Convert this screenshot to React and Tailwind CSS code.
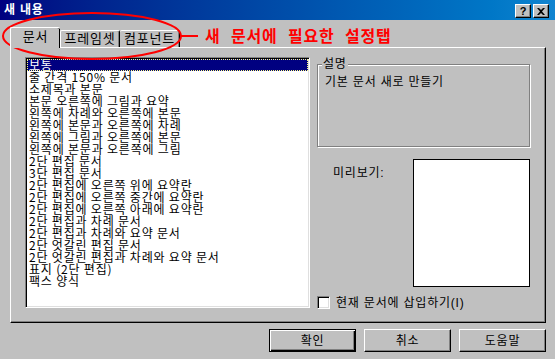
const templates = [
  '보통',
  '줄 간격 150% 문서',
  '소제목과 본문',
  '본문 오른쪽에 그림과 요약',
  '왼쪽에 차례와 오른쪽에 본문',
  '왼쪽에 본문과 오른쪽에 차례',
  '왼쪽에 그림과 오른쪽에 본문',
  '왼쪽에 본문과 오른쪽에 그림',
  '2단 편집 문서',
  '3단 편집 문서',
  '2단 편집에 오른쪽 위에 요약란',
  '2단 편집에 오른쪽 중간에 요약란',
  '2단 편집에 오른쪽 아래에 요약란',
  '2단 편집과 차례 문서',
  '2단 편집과 차례와 요약 문서',
  '2단 엇갈린 편집 문서',
  '2단 엇갈린 편집과 차례와 요약 문서',
  '표지 (2단 편집)',
  '팩스 양식',
];

const raised =
  'border border-t-white border-l-white border-r-black border-b-black shadow-[inset_-1px_-1px_0_#808080]';
const sunken =
  'border border-t-[#808080] border-l-[#808080] border-r-white border-b-white shadow-[inset_1px_1px_0_#000,inset_-1px_-1px_0_#dfdfdf]';

const TitleButton = ({ children }) => (
  <div className={`flex h-[14px] w-[16px] items-center justify-center bg-[#c0c0c0] ${raised}`}>
    {children}
  </div>
);

const DialogButton = ({ label, isDefault }) => (
  <button
    className={
      isDefault
        ? 'h-[23px] w-[87px] border border-black bg-[#c0c0c0] text-[12px] shadow-[inset_1px_1px_0_#fff,inset_-1px_-1px_0_#000,inset_-2px_-2px_0_#808080]'
        : `h-[23px] w-[87px] bg-[#c0c0c0] text-[12px] ${raised}`
    }
  >
    {label}
  </button>
);

export default function App() {
  const selected = 0;

  return (
    <div className="relative h-[359px] w-[555px] overflow-hidden bg-[#c0c0c0] font-['Liberation_Sans','Noto_Sans_CJK_KR',sans-serif] text-[12px] tracking-[0.8px] text-black">
      {/* title bar */}
      <div className="flex h-[20px] items-center justify-between bg-linear-to-r from-[#000080] to-[#1084d0] pl-[4px] pr-[6px]">
        <span className="text-[12px] font-bold leading-none text-white">새 내용</span>
        <div className="mt-[2px] flex gap-[2px]">
          <TitleButton>
            <span className="text-[11px] font-bold leading-none tracking-normal">?</span>
          </TitleButton>
          <TitleButton>
            <svg width="8" height="7" viewBox="0 0 8 7">
              <path d="M0 0h2l2 2 2-2h2L5 3.5 8 7H6L4 5 2 7H0l3-3.5z" fill="#000" />
            </svg>
          </TitleButton>
        </div>
      </div>

      <div className="pl-[10px]">
        {/* tabs */}
        <div className="mt-[7px] flex h-[20px] items-end">
          <div className="relative z-10 -mb-px flex h-[21px] w-[50px] items-start justify-center rounded-t-[2px] border-t border-l border-t-white border-l-white bg-[#c0c0c0] pt-[2px] text-[13px] leading-[14px] shadow-[inset_-1px_0_0_#000]">
            문서
          </div>
          <div className="flex h-[17px] w-[60px] items-start justify-center rounded-t-[2px] border-t border-l border-r border-t-white border-l-white border-r-black pt-[1px] text-[13px] leading-[14px] shadow-[inset_-1px_0_0_#808080]">
            프레임셋
          </div>
          <div className="flex h-[17px] w-[60px] items-start justify-center rounded-t-[2px] border-t border-r border-t-white border-r-black pt-[1px] text-[13px] leading-[14px] shadow-[inset_-1px_0_0_#808080]">
            컴포넌트
          </div>
        </div>

        {/* tab panel */}
        <div className="flex h-[276px] w-[536px] border border-t-white border-l-white border-r-black border-b-black pl-[14px] pt-[9px] shadow-[inset_-1px_-1px_0_#808080]">
          <div className={`h-[251px] w-[285px] bg-white p-[1px] ${sunken}`}>
            <ul className="font-['Noto_Sans_CJK_KR',sans-serif] text-[12px] leading-[12px]">
              {templates.map((t, i) => (
                <li
                  key={t}
                  className={
                    i === selected
                      ? 'h-[12px] whitespace-nowrap bg-[#000080] pl-[2px] text-white outline-1 outline-offset-[-1px] outline-dotted outline-[#ffff80]'
                      : 'h-[12px] whitespace-nowrap pl-[2px]'
                  }
                >
                  {t}
                </li>
              ))}
            </ul>
          </div>

          <div className="ml-[7px] flex w-[213px] flex-col">
            <div className="relative mt-[7px] h-[83px] border border-[#808080] pl-[7px] pt-[11px] shadow-[inset_1px_1px_0_#fff,1px_1px_0_#fff]">
              <span className="absolute -top-[8px] left-[4px] bg-[#c0c0c0] px-[1px] leading-[14px]">설명</span>
              <p className="leading-[12px]">기본 문서 새로 만들기</p>
            </div>

            <div className="mt-[12px] flex">
              <span className="ml-[16px] mt-[8px] leading-[12px]">미리보기:</span>
              <div className="ml-auto h-[128px] w-[117px] border border-black bg-white" />
            </div>

            <label className="mt-[9px] flex items-center">
              <span className={`h-[13px] w-[13px] bg-white ${sunken}`} />
              <span className="ml-[6px] leading-[12px]">현재 문서에 삽입하기(I)</span>
            </label>
          </div>
        </div>

        {/* buttons */}
        <div className="mt-[6px] flex w-[536px] justify-end gap-[8px]">
          <DialogButton label="확인" isDefault />
          <DialogButton label="취소" />
          <DialogButton label="도움말" />
        </div>
      </div>

      {/* red annotation */}
      <svg className="pointer-events-none absolute left-0 top-0" width="200" height="70" viewBox="0 0 200 70">
        <ellipse cx="92" cy="36" rx="89" ry="23" fill="none" stroke="#ff0000" strokeWidth="2" />
        <line x1="181" y1="36" x2="198" y2="36" stroke="#ff0000" strokeWidth="2" />
      </svg>
      <div className="pointer-events-none absolute left-[205px] top-[27px] font-['Noto_Sans_CJK_KR',sans-serif] text-[16px] font-bold leading-[16px] text-[#ff0000] [word-spacing:6px]">
        새 문서에 필요한 설정탭
      </div>
    </div>
  );
}
